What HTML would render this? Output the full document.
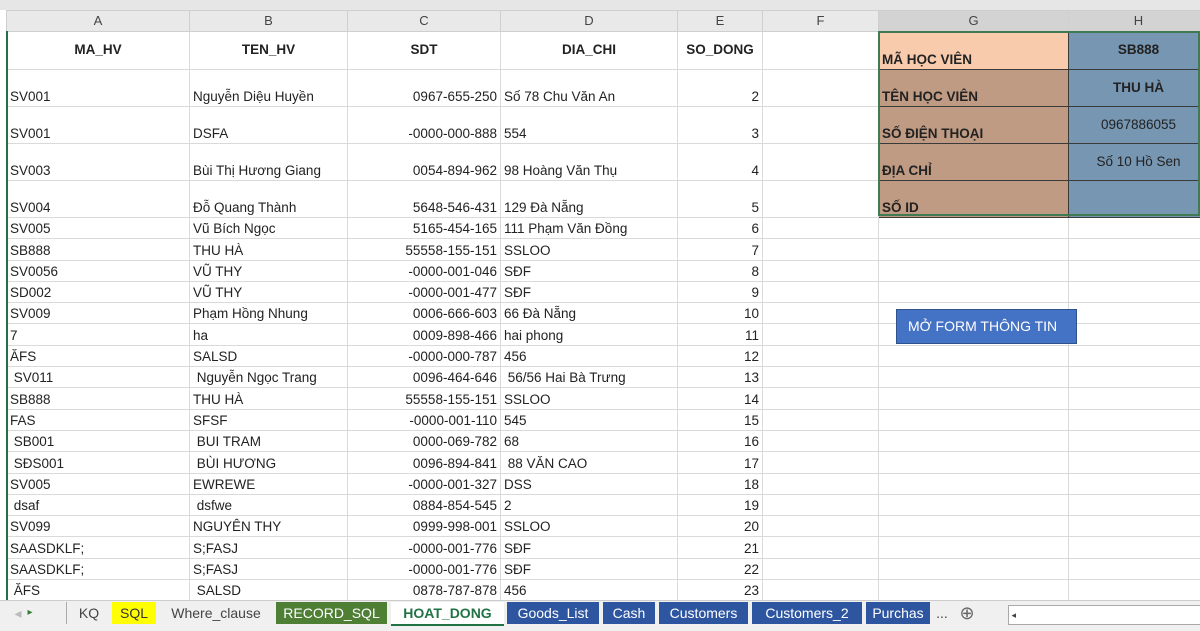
<!DOCTYPE html>
<html><head><meta charset="utf-8"><style>
body{margin:0;width:1200px;height:630px;overflow:hidden;background:#fff;font-family:"Liberation Sans",sans-serif;position:relative}
.top{position:absolute;left:0;top:0;width:1200px;height:10px;background:#e6e6e6}
table{position:absolute;left:6px;top:10px;width:1202px;border-collapse:collapse;table-layout:fixed;font-size:13.5px;color:#222}
td{border:1px solid #dadada;padding:0 3px 1px 3px;white-space:nowrap;overflow:hidden;vertical-align:bottom;height:19.3px;line-height:16px;box-sizing:border-box}
tr.s td{height:21.3px}
tr.h td{background:#e9e9e9;color:#444;text-align:center;vertical-align:middle;font-size:13px;border-color:#cfcfcf;height:21px}
tr.h td.g{background:#d3d3d3}
.r{text-align:right}.c{text-align:center}.b{font-weight:bold}
.pk{background:#f8cbad}.br{background:#c09b83;font-weight:bold}.bl{background:#7796b2;text-align:center;vertical-align:top;padding-top:10px;border-color:#3a3a3a}
.pk,.br{border-color:#3a3a3a}
.gl{position:absolute;left:6px;top:31px;width:2px;height:570px;background:#217346}
.sel{position:absolute;left:878px;top:31px;width:322px;height:185px;border:2px solid #3f7a52;box-sizing:border-box}
.btn{position:absolute;left:896px;top:309px;width:181px;height:35px;background:#4472c4;border:1px solid #2f528f;box-sizing:border-box;color:#fff;font-size:14px;line-height:33px;padding-left:11px}
.tabs{position:absolute;left:0;top:600px;width:1200px;height:30px;background:#f0f0f0;border-top:1px solid #ccc;font-size:14px}
.t{position:absolute;top:1px;height:22px;line-height:22px;text-align:center;color:#444}
.d{background:#2e56a0;color:#fff}.gr{background:#4f7f35;color:#fff}
</style></head><body>
<div class="top"></div>
<table>
<colgroup><col style="width:183px"><col style="width:158px"><col style="width:153px"><col style="width:177px"><col style="width:85px"><col style="width:116px"><col style="width:190px"><col style="width:140px"></colgroup>
<tr class="h"><td>A</td><td>B</td><td>C</td><td>D</td><td>E</td><td>F</td><td class="g">G</td><td class="g">H</td></tr>
<tr><td class="c b" style="vertical-align:middle;height:38px">MA_HV</td><td class="c b" style="vertical-align:middle">TEN_HV</td><td class="c b" style="vertical-align:middle">SDT</td><td class="c b" style="vertical-align:middle">DIA_CHI</td><td class="c b" style="vertical-align:middle">SO_DONG</td><td></td><td class="pk b">MÃ HỌC VIÊN</td><td class="bl b">SB888</td></tr>
<tr><td style="height:37px">SV001</td><td>Nguyễn Diệu Huyền</td><td class="r">0967-655-250</td><td>Số 78 Chu Văn An</td><td class="r">2</td><td></td><td class="br">TÊN HỌC VIÊN</td><td class="bl b">THU HÀ</td></tr>
<tr><td style="height:37px">SV001</td><td>DSFA</td><td class="r">-0000-000-888</td><td>554</td><td class="r">3</td><td></td><td class="br">SỐ ĐIỆN THOẠI</td><td class="bl">0967886055</td></tr>
<tr><td style="height:37px">SV003</td><td>Bùi Thị Hương Giang</td><td class="r">0054-894-962</td><td>98 Hoàng Văn Thụ</td><td class="r">4</td><td></td><td class="br">ĐỊA CHỈ</td><td class="bl">Số 10 Hồ Sen</td></tr>
<tr><td style="height:37px">SV004</td><td>Đỗ Quang Thành</td><td class="r">5648-546-431</td><td>129 Đà Nẵng</td><td class="r">5</td><td></td><td class="br">SỐ ID</td><td class="bl"></td></tr>
<tr class="s"><td>SV005</td><td>Vũ Bích Ngọc</td><td class="r">5165-454-165</td><td>111 Phạm Văn Đồng</td><td class="r">6</td><td></td><td></td><td></td></tr>
<tr class="s"><td>SB888</td><td>THU HÀ</td><td class="r">55558-155-151</td><td>SSLOO</td><td class="r">7</td><td></td><td></td><td></td></tr>
<tr class="s"><td>SV0056</td><td>VŨ THY</td><td class="r">-0000-001-046</td><td>SĐF</td><td class="r">8</td><td></td><td></td><td></td></tr>
<tr class="s"><td>SD002</td><td>VŨ THY</td><td class="r">-0000-001-477</td><td>SĐF</td><td class="r">9</td><td></td><td></td><td></td></tr>
<tr class="s"><td>SV009</td><td>Phạm Hồng Nhung</td><td class="r">0006-666-603</td><td>66 Đà Nẵng</td><td class="r">10</td><td></td><td></td><td></td></tr>
<tr class="s"><td>7</td><td>ha</td><td class="r">0009-898-466</td><td>hai phong</td><td class="r">11</td><td></td><td></td><td></td></tr>
<tr class="s"><td>ĂFS</td><td>SALSD</td><td class="r">-0000-000-787</td><td>456</td><td class="r">12</td><td></td><td></td><td></td></tr>
<tr class="s"><td>&nbsp;SV011</td><td>&nbsp;Nguyễn Ngọc Trang</td><td class="r">0096-464-646</td><td>&nbsp;56/56 Hai Bà Trưng</td><td class="r">13</td><td></td><td></td><td></td></tr>
<tr class="s"><td>SB888</td><td>THU HÀ</td><td class="r">55558-155-151</td><td>SSLOO</td><td class="r">14</td><td></td><td></td><td></td></tr>
<tr class="s"><td>FAS</td><td>SFSF</td><td class="r">-0000-001-110</td><td>545</td><td class="r">15</td><td></td><td></td><td></td></tr>
<tr class="s"><td>&nbsp;SB001</td><td>&nbsp;BUI TRAM</td><td class="r">0000-069-782</td><td>68</td><td class="r">16</td><td></td><td></td><td></td></tr>
<tr class="s"><td>&nbsp;SĐS001</td><td>&nbsp;BÙI HƯƠNG</td><td class="r">0096-894-841</td><td>&nbsp;88 VĂN CAO</td><td class="r">17</td><td></td><td></td><td></td></tr>
<tr class="s"><td>SV005</td><td>EWREWE</td><td class="r">-0000-001-327</td><td>DSS</td><td class="r">18</td><td></td><td></td><td></td></tr>
<tr class="s"><td>&nbsp;dsaf</td><td>&nbsp;dsfwe</td><td class="r">0884-854-545</td><td>2</td><td class="r">19</td><td></td><td></td><td></td></tr>
<tr class="s"><td>SV099</td><td>NGUYÊN THY</td><td class="r">0999-998-001</td><td>SSLOO</td><td class="r">20</td><td></td><td></td><td></td></tr>
<tr class="s"><td>SAASDKLF;</td><td>S;FASJ</td><td class="r">-0000-001-776</td><td>SĐF</td><td class="r">21</td><td></td><td></td><td></td></tr>
<tr class="s"><td>SAASDKLF;</td><td>S;FASJ</td><td class="r">-0000-001-776</td><td>SĐF</td><td class="r">22</td><td></td><td></td><td></td></tr>
<tr class="s"><td>&nbsp;ĂFS</td><td>&nbsp;SALSD</td><td class="r">0878-787-878</td><td>456</td><td class="r">23</td><td></td><td></td><td></td></tr>
</table>
<div class="gl"></div>
<div class="sel"></div>
<div class="btn">MỞ FORM THÔNG TIN</div>
<div class="tabs">
<div class="t" style="left:8px;width:20px;color:#bbb">◂</div>
<div class="t" style="left:20px;width:20px;color:#2e7d32;font-size:10px">▸</div>
<div class="t" style="left:66px;width:44px;border-left:1px solid #aaa">KQ</div>
<div class="t" style="left:112px;width:44px;background:#ffff00;color:#333">SQL</div>
<div class="t" style="left:160px;width:112px">Where_clause</div>
<div class="t gr" style="left:276px;width:111px">RECORD_SQL</div>
<div class="t" style="left:391px;width:113px;background:#fff;color:#217346;font-weight:bold;border-bottom:2px solid #217346">HOAT_DONG</div>
<div class="t d" style="left:507px;width:92px">Goods_List</div>
<div class="t d" style="left:603px;width:52px">Cash</div>
<div class="t d" style="left:659px;width:89px">Customers</div>
<div class="t d" style="left:752px;width:110px">Customers_2</div>
<div class="t d" style="left:866px;width:64px">Purchas</div>
<div class="t" style="left:930px;width:24px">...</div>
<div class="t" style="left:956px;width:22px;font-size:18px;color:#666">⊕</div>
<div class="t" style="left:1008px;width:192px;height:18px;top:4px;background:#fff;border:1px solid #aaa;text-align:left;font-size:9px;line-height:18px">&nbsp;◂</div>
</div>
</body></html>
